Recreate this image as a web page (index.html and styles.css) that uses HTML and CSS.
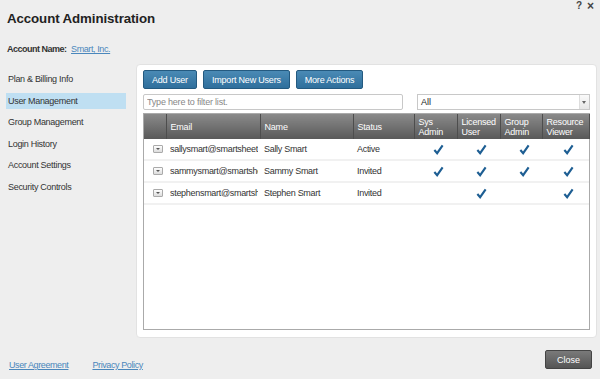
FILE: index.html
```html
<!DOCTYPE html>
<html lang="en">
<head>
  <meta charset="UTF-8">
  <title>Account Administration</title>
  <link rel="stylesheet" href="styles.css">
</head>
<body>
  <div class="dialog">
    <div class="title-bar">
      <h1>Account Administration</h1>
      <div class="win-icons"><span>?</span><span class="x">×</span></div>
    </div>
    <div class="account-line">
      <b>Account Name:</b> <a href="#">Smart, Inc.</a>
    </div>

    <div class="main">
      <ul class="sidebar">
        <li>Plan &amp; Billing Info</li>
        <li class="selected">User Management</li>
        <li>Group Management</li>
        <li>Login History</li>
        <li>Account Settings</li>
        <li>Security Controls</li>
      </ul>

      <div class="panel">
        <div class="actions">
          <button class="btn">Add User</button>
          <button class="btn">Import New Users</button>
          <button class="btn">More Actions</button>
        </div>
        <div class="filters">
          <input class="filter" type="text" placeholder="Type here to filter list.">
          <div class="select"><span>All</span><span class="arrow"></span></div>
        </div>

        <div class="grid">
          <table>
            <colgroup>
              <col style="width:22px"><col style="width:94px"><col style="width:93px"><col style="width:61px">
              <col style="width:43px"><col style="width:43px"><col style="width:42px"><col style="width:47px">
            </colgroup>
            <thead>
              <tr>
                <th></th>
                <th>Email</th>
                <th>Name</th>
                <th>Status</th>
                <th>Sys<br>Admin</th>
                <th>Licensed<br>User</th>
                <th>Group<br>Admin</th>
                <th>Resource<br>Viewer</th>
              </tr>
            </thead>
            <tbody>
              <tr>
                <td><span class="expand"></span></td>
                <td><div class="email">sallysmart@smartsheet.com</div></td>
                <td>Sally Smart</td>
                <td>Active</td>
                <td class="chk"><svg viewBox="0 0 12 12"><path d="M1.5 6.5 L4.5 10 L10.5 1.5"/></svg></td>
                <td class="chk"><svg viewBox="0 0 12 12"><path d="M1.5 6.5 L4.5 10 L10.5 1.5"/></svg></td>
                <td class="chk"><svg viewBox="0 0 12 12"><path d="M1.5 6.5 L4.5 10 L10.5 1.5"/></svg></td>
                <td class="chk"><svg viewBox="0 0 12 12"><path d="M1.5 6.5 L4.5 10 L10.5 1.5"/></svg></td>
              </tr>
              <tr>
                <td><span class="expand"></span></td>
                <td><div class="email">sammysmart@smartsheet.com</div></td>
                <td>Sammy Smart</td>
                <td>Invited</td>
                <td class="chk"><svg viewBox="0 0 12 12"><path d="M1.5 6.5 L4.5 10 L10.5 1.5"/></svg></td>
                <td class="chk"><svg viewBox="0 0 12 12"><path d="M1.5 6.5 L4.5 10 L10.5 1.5"/></svg></td>
                <td class="chk"><svg viewBox="0 0 12 12"><path d="M1.5 6.5 L4.5 10 L10.5 1.5"/></svg></td>
                <td class="chk"><svg viewBox="0 0 12 12"><path d="M1.5 6.5 L4.5 10 L10.5 1.5"/></svg></td>
              </tr>
              <tr>
                <td><span class="expand"></span></td>
                <td><div class="email">stephensmart@smartsheet.com</div></td>
                <td>Stephen Smart</td>
                <td>Invited</td>
                <td class="chk"></td>
                <td class="chk"><svg viewBox="0 0 12 12"><path d="M1.5 6.5 L4.5 10 L10.5 1.5"/></svg></td>
                <td class="chk"></td>
                <td class="chk"><svg viewBox="0 0 12 12"><path d="M1.5 6.5 L4.5 10 L10.5 1.5"/></svg></td>
              </tr>
            </tbody>
          </table>
        </div>
      </div>
    </div>

    <div class="footer">
      <div class="links">
        <a href="#">User Agreement</a>
        <a href="#">Privacy Policy</a>
      </div>
      <button class="close">Close</button>
    </div>
  </div>
</body>
</html>
```

FILE: styles.css
```css
body {
  margin: 0;
  padding: 0;
  background-color: #eeeeee;
  font-family: "Liberation Sans", Arial, sans-serif;
  font-size: 9px;
  color: #333;
}
.dialog {
  width: 600px;
  height: 379px;
  display: flex;
  flex-direction: column;
}
.title-bar {
  height: 38px;
  display: flex;
  justify-content: space-between;
  padding: 0 6px 0 7px;
  box-sizing: border-box;
}
.title-bar h1 {
  margin: 0;
  font-size: 13.3px;
  line-height: 38px;
  color: #222;
  letter-spacing: -0.1px;
}
.win-icons {
  display: flex;
  gap: 5px;
  font-size: 10px;
  font-weight: bold;
  color: #444;
  line-height: 12px;
}
.win-icons .x {
  font-size: 12px;
}
.account-line {
  height: 22px;
  line-height: 22px;
  padding: 0 7px;
  color: #333;
}
.account-line b {
  margin-right: 2px;
  letter-spacing: -0.5px;
}
a {
  color: #4a87bc;
  text-decoration: underline;
  letter-spacing: -0.4px;
}
.main {
  display: flex;
  gap: 10px;
  margin-top: 4px;
  height: 274px;
  padding-left: 6px;
}
.sidebar {
  list-style: none;
  margin: 0;
  padding: 7px 0 0;
  width: 120px;
  display: flex;
  flex-direction: column;
  gap: 5.6px;
}
.sidebar li {
  height: 16px;
  line-height: 16px;
  padding-left: 2px;
  letter-spacing: -0.3px;
  color: #333;
}
.sidebar li.selected {
  background-color: #bfdff2;
}
.panel {
  width: 461px;
  background-color: #fff;
  border-radius: 4px;
  border: 1px solid #e2e2e2;
  box-sizing: border-box;
  padding: 5px 6px 7px;
  display: flex;
  flex-direction: column;
}
.actions {
  display: flex;
  gap: 6px;
}
.btn {
  height: 19px;
  padding: 0 8px;
  font-family: inherit;
  font-size: 9px;
  letter-spacing: -0.2px;
  color: #fff;
  background: linear-gradient(#4a8ab5, #2f6f9c);
  border: 1px solid #245a80;
  border-radius: 2px;
  cursor: pointer;
}
.filters {
  display: flex;
  justify-content: space-between;
  margin-top: 5px;
  height: 16px;
}
.filter {
  width: 260px;
  height: 16px;
  box-sizing: border-box;
  border: 1px solid #c8c8c8;
  border-radius: 2px;
  padding: 0 3px;
  font-family: inherit;
  font-size: 9px;
  letter-spacing: -0.2px;
}
.filter::placeholder {
  color: #888;
}
.select {
  width: 173px;
  height: 16px;
  box-sizing: border-box;
  border: 1px solid #c8c8c8;
  display: flex;
  justify-content: space-between;
  align-items: center;
  padding-left: 3px;
  color: #222;
}
.select .arrow {
  width: 9px;
  height: 14px;
  border-left: 1px solid #ddd;
  background: linear-gradient(#fafafa, #e6e6e6);
  position: relative;
}
.select .arrow::after {
  content: "";
  position: absolute;
  left: 2px;
  top: 6px;
  border-left: 2.5px solid transparent;
  border-right: 2.5px solid transparent;
  border-top: 3px solid #666;
}
.grid {
  margin-top: 3px;
  width: 447px;
  flex: 1;
  border: 1px solid #aaa;
  box-sizing: border-box;
}
table {
  border-collapse: collapse;
  table-layout: fixed;
  width: 445px;
}
th {
  height: 25px;
  padding: 0 4px;
  text-align: left;
  font-weight: normal;
  color: #fff;
  line-height: 10px;
  background: linear-gradient(#8a8a8a, #595959);
  border-left: 1px solid #9a9a9a;
  border-right: 1px solid #4d4d4d;
  letter-spacing: -0.2px;
}
th:first-child {
  border-left: none;
}
td {
  height: 20px;
  padding: 0 4px;
  border-bottom: 2px solid #f1f1f1;
  white-space: nowrap;
  overflow: hidden;
  color: #333;
  letter-spacing: -0.3px;
}
.email {
  width: 88px;
  overflow: hidden;
  white-space: nowrap;
}
.expand {
  display: block;
  width: 8px;
  height: 6px;
  margin-left: 5px;
  border: 1px solid #aaa;
  border-radius: 1px;
  background: linear-gradient(#fdfdfd, #dcdcdc);
  position: relative;
}
.expand::after {
  content: "";
  position: absolute;
  left: 2px;
  top: 2px;
  border-left: 2px solid transparent;
  border-right: 2px solid transparent;
  border-top: 2px solid #555;
}
td.chk {
  text-align: center;
  padding: 0 0 0 6px;
}
td.chk svg {
  width: 11px;
  height: 11px;
  display: inline-block;
  vertical-align: middle;
}
td.chk path {
  fill: none;
  stroke: #1d5e93;
  stroke-width: 2.3;
}
.footer {
  display: flex;
  justify-content: space-between;
  padding: 12px 8px 0 9px;
}
.links {
  display: flex;
  gap: 24px;
  padding-top: 10px;
}
.close {
  width: 47px;
  height: 19px;
  font-family: inherit;
  font-size: 9px;
  color: #fff;
  background: linear-gradient(#7a7a7a, #555);
  border: 1px solid #444;
  border-radius: 2px;
}
```
